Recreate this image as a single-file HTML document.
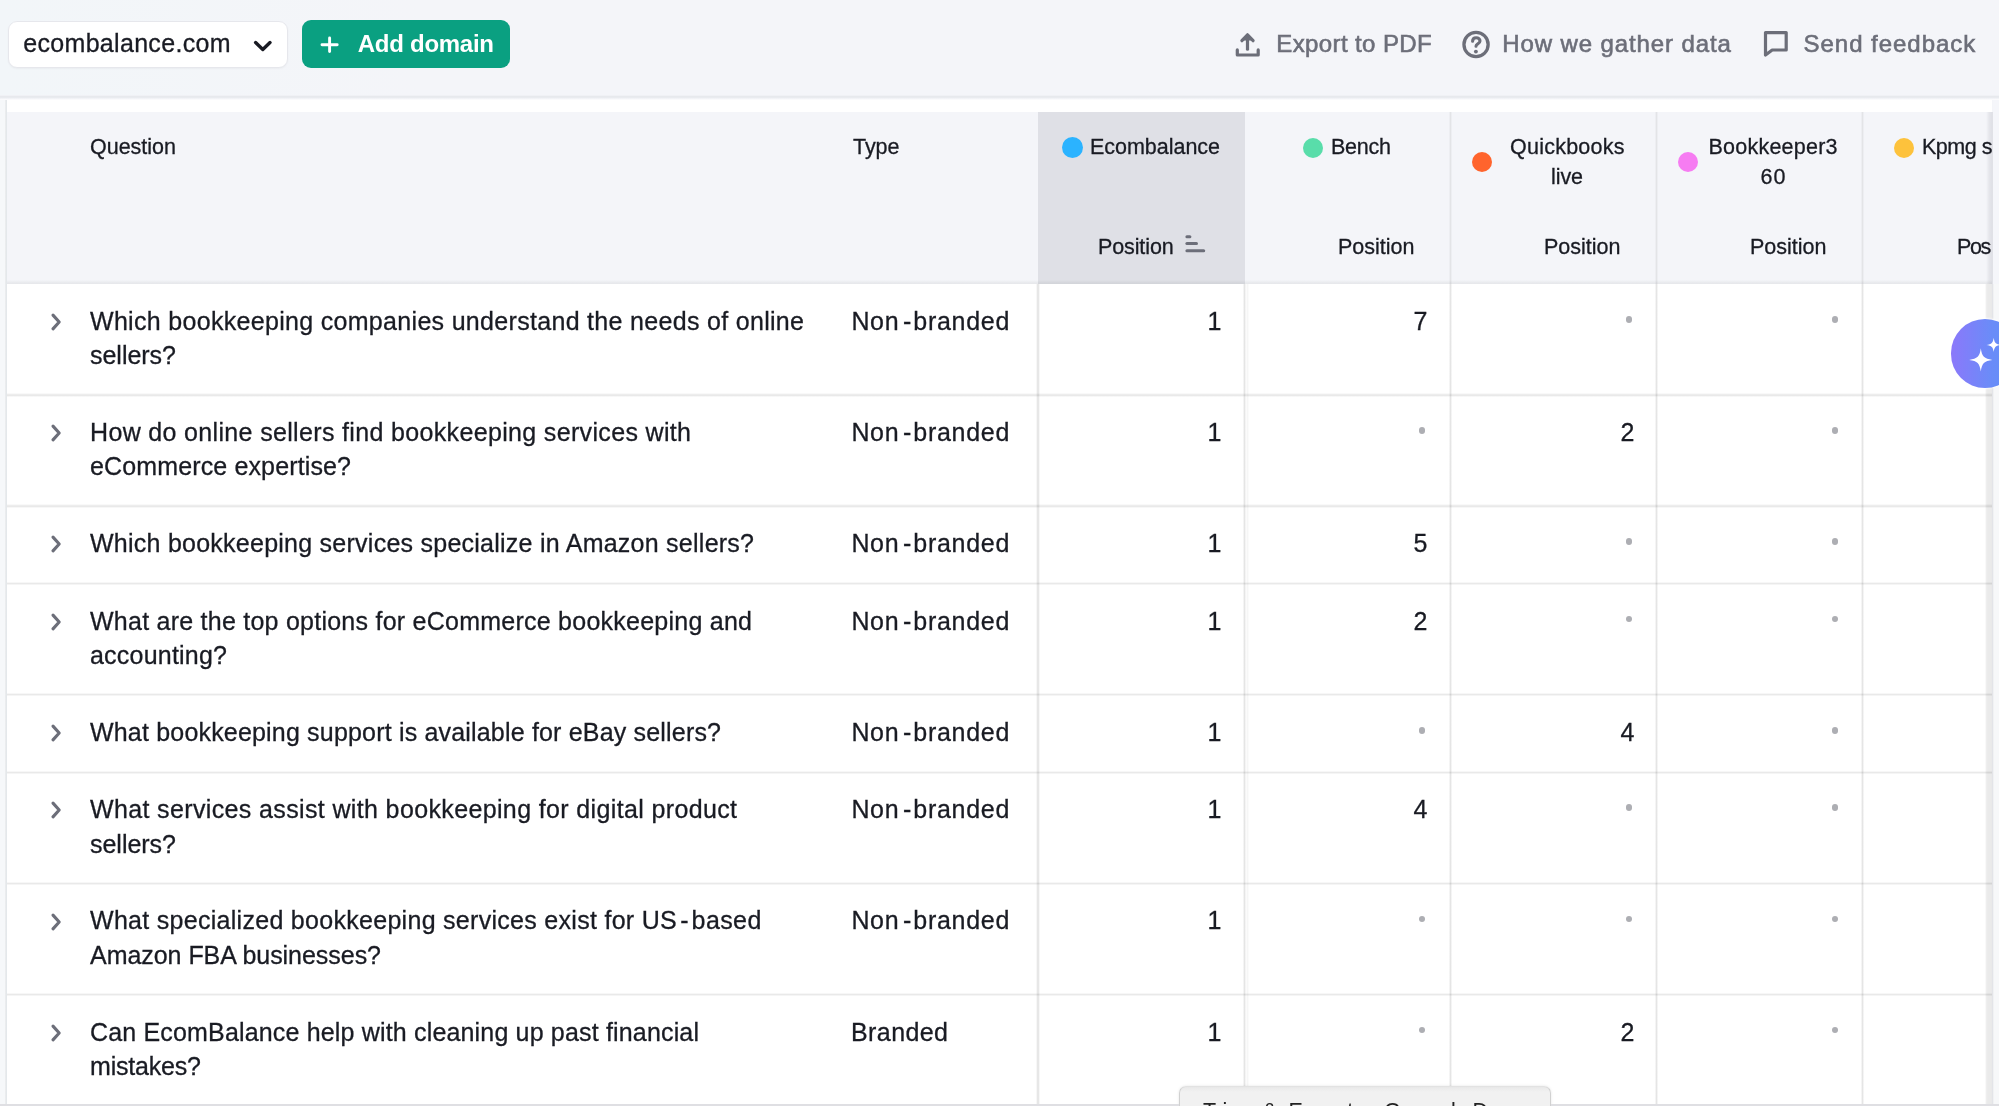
<!DOCTYPE html>
<html lang="en"><head><meta charset="utf-8"><title>Questions</title>
<style>
html,body{margin:0;padding:0}
body{width:1999px;height:1106px;overflow:hidden;position:relative;background:linear-gradient(90deg,#f2f6f9,#f4f5f9 420px);font-family:"Liberation Sans",sans-serif}
.t{position:absolute;white-space:nowrap;line-height:40px;-webkit-text-stroke:0.3px #191b23}
.a{position:absolute}
.tt{font-size:21.5px;color:#222;-webkit-text-stroke:0}
.m{-webkit-text-stroke:0.6px #6c6e79}
.dot{position:absolute;width:6.8px;height:6.8px;border-radius:50%;background:#adaeb3}
.hl{position:absolute;left:7px;width:1985px;height:3.4px;background:linear-gradient(rgba(0,0,0,0),rgba(0,0,0,.088) 45%,rgba(0,0,0,.088) 65%,rgba(0,0,0,0))}
.vl{position:absolute;top:112px;width:3.2px;height:994px;background:linear-gradient(90deg,rgba(0,0,0,0),rgba(0,0,0,.1) 40%,rgba(0,0,0,.1) 60%,rgba(0,0,0,0))}
.hd{position:absolute;width:21px;height:21px;border-radius:50%}
</style></head><body>
<div id="page" style="position:absolute;left:0;top:0;width:1999px;height:1106px;overflow:hidden;will-change:transform">
<div class="a" style="left:0;top:95px;width:1999px;height:5px;background:linear-gradient(#f4f5f9,#e7e9ed 30%,#e9ebef 50%,#f5f6f9 78%,#fefefe)"></div>
<div class="a" id="tbl" style="left:7px;top:100px;width:1985px;height:1006px;background:#fff"></div>
<div class="a" style="left:0;top:100px;width:6px;height:1006px;background:#f6f8fa"></div>
<div class="a" style="left:4.8px;top:100px;width:2.6px;height:1006px;background:linear-gradient(90deg,rgba(0,0,0,0),rgba(0,0,0,.085) 45%,rgba(0,0,0,.085) 60%,rgba(0,0,0,0))"></div>
<div class="a" id="thead" style="left:7px;top:112px;width:1985px;height:172px;background:#f4f5f9"></div>
<div class="a" style="left:1038px;top:112px;width:206.5px;height:172px;background:#dfe0e6"></div>
<div class="a" style="left:7px;top:280.4px;width:1985px;height:3.6px;background:linear-gradient(rgba(0,0,0,0),rgba(40,50,40,.05) 60%,rgba(40,50,40,.07))"></div>
<div class="vl" style="left:1036.4px;top:284px;height:822px"></div>
<div class="vl" style="left:1243px;top:284px;height:822px"></div>
<div class="vl" style="left:1246.2px;top:284px;height:822px;width:2.4px;opacity:.35"></div>
<div class="vl" style="left:1448.9px;top:284px;height:822px"></div>
<div class="vl" style="left:1448.9px;height:172px;opacity:.7"></div>
<div class="vl" style="left:1655px;top:284px;height:822px"></div>
<div class="vl" style="left:1655px;height:172px;opacity:.7"></div>
<div class="vl" style="left:1860.9px;top:284px;height:822px"></div>
<div class="vl" style="left:1860.9px;height:172px;opacity:.7"></div>
<div class="hd" style="left:1062px;top:137px;background:#2bb3ff"></div>
<div class="hd" style="left:1303px;top:137.5px;width:20px;height:20px;background:#59ddaa"></div>
<div class="hd" style="left:1472px;top:152px;width:20px;height:20px;background:#ff642d"></div>
<div class="hd" style="left:1678px;top:152px;width:20px;height:20px;background:#f67cf2"></div>
<div class="hd" style="left:1893.5px;top:137.5px;width:20px;height:20px;background:#fdc23c"></div>
<svg class="a" style="left:1184px;top:233px" width="24" height="22" viewBox="0 0 24 22"><g stroke="#6c6e79" stroke-width="3" stroke-linecap="round"><path d="M2.9 3.7H5.9"/><path d="M2.9 10.6H12.5"/><path d="M2.9 17.7H19.7"/></g></svg>
<!-- toolbar -->
<div class="a" style="left:8px;top:21px;width:279.5px;height:47px;box-sizing:border-box;background:#fff;border:1px solid #e6e7ec;border-radius:9px;box-shadow:0 1px 2px rgba(0,0,0,.04)"></div>
<svg class="a" style="left:250px;top:36px" width="26" height="20" viewBox="0 0 26 20"><path d="M5.6 6.6 L12.8 13.4 L20 6.6" fill="none" stroke="#191b23" stroke-width="3.4" stroke-linecap="round" stroke-linejoin="round"/></svg>
<div class="a" style="left:302px;top:20px;width:208.3px;height:48.2px;background:#0aa081;border-radius:9px"></div>
<svg class="a" style="left:319px;top:34px" width="22" height="22" viewBox="0 0 22 22"><path d="M3 10.8H18.2M10.6 4V17.6" fill="none" stroke="#fff" stroke-width="2.9" stroke-linecap="round"/></svg>
<svg class="a" style="left:1233px;top:30px" width="30" height="30" viewBox="0 0 30 30"><g fill="none" stroke="#6c6e79" stroke-width="3.2" stroke-linecap="round" stroke-linejoin="round"><path d="M4.3 19.9V25H25.2V19.9"/><path d="M14.5 6V19.2"/><path d="M8.9 10.7L14.5 4.8L20.1 10.7"/></g><path d="M10.2 10.5L14.5 5.9L18.8 10.5Z" fill="#6c6e79"/></svg>
<svg class="a" style="left:1460px;top:29px" width="32" height="32" viewBox="0 0 32 32"><circle cx="16.05" cy="15.5" r="12.1" fill="none" stroke="#6c6e79" stroke-width="3.3"/><path d="M12.6 12.3C12.6 9.9 14.2 8.7 16.2 8.7C18.4 8.7 20 10.1 20 12C20 14.6 16 14.9 16 17.3" fill="none" stroke="#6c6e79" stroke-width="3.1" stroke-linecap="round"/><circle cx="15.9" cy="22.6" r="1.95" fill="#6c6e79"/></svg>
<svg class="a" style="left:1760px;top:28px" width="32" height="32" viewBox="0 0 32 32"><path d="M5.5 27V4.55H26.2V22H12.2Z" fill="none" stroke="#6c6e79" stroke-width="3.2" stroke-linejoin="round"/></svg>
<svg class="a" style="left:46px;top:309.90px" width="22" height="24" viewBox="0 0 22 24"><path d="M7 5.1 L13.2 12 L7 18.9" fill="none" stroke="#6c6e79" stroke-width="3.1" stroke-linecap="round" stroke-linejoin="round"/></svg>
<div class="dot" style="left:1625.5px;top:315.9px"></div>
<div class="dot" style="left:1831.5px;top:315.9px"></div>
<div class="hl" style="top:393.2px"></div>
<svg class="a" style="left:46px;top:421.00px" width="22" height="24" viewBox="0 0 22 24"><path d="M7 5.1 L13.2 12 L7 18.9" fill="none" stroke="#6c6e79" stroke-width="3.1" stroke-linecap="round" stroke-linejoin="round"/></svg>
<div class="dot" style="left:1418.5px;top:427.0px"></div>
<div class="dot" style="left:1831.5px;top:427.0px"></div>
<div class="hl" style="top:504.3px"></div>
<svg class="a" style="left:46px;top:532.10px" width="22" height="24" viewBox="0 0 22 24"><path d="M7 5.1 L13.2 12 L7 18.9" fill="none" stroke="#6c6e79" stroke-width="3.1" stroke-linecap="round" stroke-linejoin="round"/></svg>
<div class="dot" style="left:1625.5px;top:538.1px"></div>
<div class="dot" style="left:1831.5px;top:538.1px"></div>
<div class="hl" style="top:581.9px"></div>
<svg class="a" style="left:46px;top:609.70px" width="22" height="24" viewBox="0 0 22 24"><path d="M7 5.1 L13.2 12 L7 18.9" fill="none" stroke="#6c6e79" stroke-width="3.1" stroke-linecap="round" stroke-linejoin="round"/></svg>
<div class="dot" style="left:1625.5px;top:615.7px"></div>
<div class="dot" style="left:1831.5px;top:615.7px"></div>
<div class="hl" style="top:693.0px"></div>
<svg class="a" style="left:46px;top:720.80px" width="22" height="24" viewBox="0 0 22 24"><path d="M7 5.1 L13.2 12 L7 18.9" fill="none" stroke="#6c6e79" stroke-width="3.1" stroke-linecap="round" stroke-linejoin="round"/></svg>
<div class="dot" style="left:1418.5px;top:726.8px"></div>
<div class="dot" style="left:1831.5px;top:726.8px"></div>
<div class="hl" style="top:770.6px"></div>
<svg class="a" style="left:46px;top:798.40px" width="22" height="24" viewBox="0 0 22 24"><path d="M7 5.1 L13.2 12 L7 18.9" fill="none" stroke="#6c6e79" stroke-width="3.1" stroke-linecap="round" stroke-linejoin="round"/></svg>
<div class="dot" style="left:1625.5px;top:804.4px"></div>
<div class="dot" style="left:1831.5px;top:804.4px"></div>
<div class="hl" style="top:881.7px"></div>
<svg class="a" style="left:46px;top:909.50px" width="22" height="24" viewBox="0 0 22 24"><path d="M7 5.1 L13.2 12 L7 18.9" fill="none" stroke="#6c6e79" stroke-width="3.1" stroke-linecap="round" stroke-linejoin="round"/></svg>
<div class="dot" style="left:1418.5px;top:915.5px"></div>
<div class="dot" style="left:1625.5px;top:915.5px"></div>
<div class="dot" style="left:1831.5px;top:915.5px"></div>
<div class="hl" style="top:992.8px"></div>
<svg class="a" style="left:46px;top:1020.60px" width="22" height="24" viewBox="0 0 22 24"><path d="M7 5.1 L13.2 12 L7 18.9" fill="none" stroke="#6c6e79" stroke-width="3.1" stroke-linecap="round" stroke-linejoin="round"/></svg>
<div class="dot" style="left:1418.5px;top:1026.6px"></div>
<div class="dot" style="left:1831.5px;top:1026.6px"></div>
<div class="hl" style="top:1103.9px"></div>
<div class="t " style="left:90.00px;top:301px;font-size:25px;letter-spacing:0.310px;color:#191b23;">Which bookkeeping companies understand the needs of online</div>
<div class="t " style="left:90.00px;top:335px;font-size:25px;letter-spacing:-0.021px;color:#191b23;">sellers?</div>
<div class="t " style="left:851.40px;top:301px;font-size:25px;letter-spacing:0.669px;color:#191b23;">Non</div>
<div class="t " style="left:903.10px;top:301px;font-size:25px;letter-spacing:0.000px;color:#191b23;">-</div>
<div class="t " style="left:913.30px;top:301px;font-size:25px;letter-spacing:0.709px;color:#191b23;">branded</div>
<div class="t " style="left:1207.40px;top:301px;font-size:25px;letter-spacing:0.000px;color:#191b23;">1</div>
<div class="t " style="left:1413.60px;top:301px;font-size:25px;letter-spacing:0.000px;color:#191b23;">7</div>
<div class="t " style="left:90.00px;top:412px;font-size:25px;letter-spacing:0.340px;color:#191b23;">How do online sellers find bookkeeping services with</div>
<div class="t " style="left:90.00px;top:446px;font-size:25px;letter-spacing:0.135px;color:#191b23;">eCommerce expertise?</div>
<div class="t " style="left:851.40px;top:412px;font-size:25px;letter-spacing:0.669px;color:#191b23;">Non</div>
<div class="t " style="left:903.10px;top:412px;font-size:25px;letter-spacing:0.000px;color:#191b23;">-</div>
<div class="t " style="left:913.30px;top:412px;font-size:25px;letter-spacing:0.709px;color:#191b23;">branded</div>
<div class="t " style="left:1207.40px;top:412px;font-size:25px;letter-spacing:0.000px;color:#191b23;">1</div>
<div class="t " style="left:1620.40px;top:412px;font-size:25px;letter-spacing:0.000px;color:#191b23;">2</div>
<div class="t " style="left:90.00px;top:523px;font-size:25px;letter-spacing:0.249px;color:#191b23;">Which bookkeeping services specialize in Amazon sellers?</div>
<div class="t " style="left:851.40px;top:523px;font-size:25px;letter-spacing:0.669px;color:#191b23;">Non</div>
<div class="t " style="left:903.10px;top:523px;font-size:25px;letter-spacing:0.000px;color:#191b23;">-</div>
<div class="t " style="left:913.30px;top:523px;font-size:25px;letter-spacing:0.709px;color:#191b23;">branded</div>
<div class="t " style="left:1207.40px;top:523px;font-size:25px;letter-spacing:0.000px;color:#191b23;">1</div>
<div class="t " style="left:1413.60px;top:523px;font-size:25px;letter-spacing:0.000px;color:#191b23;">5</div>
<div class="t " style="left:90.00px;top:601px;font-size:25px;letter-spacing:0.245px;color:#191b23;">What are the top options for eCommerce bookkeeping and</div>
<div class="t " style="left:90.00px;top:635px;font-size:25px;letter-spacing:0.217px;color:#191b23;">accounting?</div>
<div class="t " style="left:851.40px;top:601px;font-size:25px;letter-spacing:0.669px;color:#191b23;">Non</div>
<div class="t " style="left:903.10px;top:601px;font-size:25px;letter-spacing:0.000px;color:#191b23;">-</div>
<div class="t " style="left:913.30px;top:601px;font-size:25px;letter-spacing:0.709px;color:#191b23;">branded</div>
<div class="t " style="left:1207.40px;top:601px;font-size:25px;letter-spacing:0.000px;color:#191b23;">1</div>
<div class="t " style="left:1413.60px;top:601px;font-size:25px;letter-spacing:0.000px;color:#191b23;">2</div>
<div class="t " style="left:90.00px;top:712px;font-size:25px;letter-spacing:0.182px;color:#191b23;">What bookkeeping support is available for eBay sellers?</div>
<div class="t " style="left:851.40px;top:712px;font-size:25px;letter-spacing:0.669px;color:#191b23;">Non</div>
<div class="t " style="left:903.10px;top:712px;font-size:25px;letter-spacing:0.000px;color:#191b23;">-</div>
<div class="t " style="left:913.30px;top:712px;font-size:25px;letter-spacing:0.709px;color:#191b23;">branded</div>
<div class="t " style="left:1207.40px;top:712px;font-size:25px;letter-spacing:0.000px;color:#191b23;">1</div>
<div class="t " style="left:1620.40px;top:712px;font-size:25px;letter-spacing:0.000px;color:#191b23;">4</div>
<div class="t " style="left:90.00px;top:789px;font-size:25px;letter-spacing:0.363px;color:#191b23;">What services assist with bookkeeping for digital product</div>
<div class="t " style="left:90.00px;top:824px;font-size:25px;letter-spacing:-0.021px;color:#191b23;">sellers?</div>
<div class="t " style="left:851.40px;top:789px;font-size:25px;letter-spacing:0.669px;color:#191b23;">Non</div>
<div class="t " style="left:903.10px;top:789px;font-size:25px;letter-spacing:0.000px;color:#191b23;">-</div>
<div class="t " style="left:913.30px;top:789px;font-size:25px;letter-spacing:0.709px;color:#191b23;">branded</div>
<div class="t " style="left:1207.40px;top:789px;font-size:25px;letter-spacing:0.000px;color:#191b23;">1</div>
<div class="t " style="left:1413.60px;top:789px;font-size:25px;letter-spacing:0.000px;color:#191b23;">4</div>
<div class="t " style="left:90.00px;top:900px;font-size:25px;letter-spacing:0.290px;color:#191b23;">What specialized bookkeeping services exist for US</div>
<div class="t " style="left:680.20px;top:900px;font-size:25px;letter-spacing:0.000px;color:#191b23;">-</div>
<div class="t " style="left:691.60px;top:900px;font-size:25px;letter-spacing:0.396px;color:#191b23;">based</div>
<div class="t " style="left:90.00px;top:935px;font-size:25px;letter-spacing:-0.039px;color:#191b23;">Amazon FBA businesses?</div>
<div class="t " style="left:851.40px;top:900px;font-size:25px;letter-spacing:0.669px;color:#191b23;">Non</div>
<div class="t " style="left:903.10px;top:900px;font-size:25px;letter-spacing:0.000px;color:#191b23;">-</div>
<div class="t " style="left:913.30px;top:900px;font-size:25px;letter-spacing:0.709px;color:#191b23;">branded</div>
<div class="t " style="left:1207.40px;top:900px;font-size:25px;letter-spacing:0.000px;color:#191b23;">1</div>
<div class="t " style="left:90.00px;top:1012px;font-size:25px;letter-spacing:0.169px;color:#191b23;">Can EcomBalance help with cleaning up past financial</div>
<div class="t " style="left:90.00px;top:1046px;font-size:25px;letter-spacing:-0.192px;color:#191b23;">mistakes?</div>
<div class="t " style="left:851.00px;top:1012px;font-size:25px;letter-spacing:0.413px;color:#191b23;">Branded</div>
<div class="t " style="left:1207.40px;top:1012px;font-size:25px;letter-spacing:0.000px;color:#191b23;">1</div>
<div class="t " style="left:1620.40px;top:1012px;font-size:25px;letter-spacing:0.000px;color:#191b23;">2</div>
<div class="t " style="left:90.00px;top:127px;font-size:21.5px;letter-spacing:-0.008px;color:#191b23;">Question</div>
<div class="t " style="left:853.00px;top:127px;font-size:21.5px;letter-spacing:-0.037px;color:#191b23;">Type</div>
<div class="t " style="left:1090.00px;top:127px;font-size:21.5px;letter-spacing:-0.027px;color:#191b23;">Ecombalance</div>
<div class="t " style="left:1098.00px;top:227px;font-size:21.5px;letter-spacing:-0.113px;color:#191b23;">Position</div>
<div class="t " style="left:1331.00px;top:127px;font-size:21.5px;letter-spacing:-0.241px;color:#191b23;">Bench</div>
<div class="t " style="left:1338.00px;top:227px;font-size:21.5px;letter-spacing:0.002px;color:#191b23;">Position</div>
<div class="t " style="left:1510.00px;top:127px;font-size:21.5px;letter-spacing:0.241px;color:#191b23;">Quickbooks</div>
<div class="t " style="left:1551.00px;top:157px;font-size:21.5px;letter-spacing:-0.087px;color:#191b23;">live</div>
<div class="t " style="left:1544.00px;top:227px;font-size:21.5px;letter-spacing:0.002px;color:#191b23;">Position</div>
<div class="t " style="left:1708.50px;top:127px;font-size:21.5px;letter-spacing:0.230px;color:#191b23;">Bookkeeper3</div>
<div class="t " style="left:1760.50px;top:157px;font-size:21.5px;letter-spacing:1.085px;color:#191b23;">60</div>
<div class="t " style="left:1750.00px;top:227px;font-size:21.5px;letter-spacing:0.002px;color:#191b23;">Position</div>
<div class="t " style="left:1922.00px;top:127px;font-size:21.5px;letter-spacing:-0.478px;color:#191b23;">Kpmg s</div>
<div class="t " style="left:1957.00px;top:227px;font-size:21.5px;letter-spacing:-1.374px;color:#191b23;">Pos</div>
<div class="t " style="left:23.30px;top:23px;font-size:25px;letter-spacing:0.308px;color:#191b23;">ecombalance.com</div>
<div class="t " style="left:357.80px;top:24px;font-size:24px;letter-spacing:-0.273px;color:#fff;font-weight:700;-webkit-text-stroke:0;">Add domain</div>
<div class="t m" style="left:1276.30px;top:24px;font-size:24px;letter-spacing:0.390px;color:#6c6e79;">Export to PDF</div>
<div class="t m" style="left:1502.30px;top:24px;font-size:24px;letter-spacing:0.885px;color:#6c6e79;">How we gather data</div>
<div class="t m" style="left:1803.60px;top:24px;font-size:24px;letter-spacing:0.956px;color:#6c6e79;">Send feedback</div>
<!-- right edge -->
<div class="a" style="left:1992.6px;top:100px;width:7px;height:1006px;background:#f7f8f9"></div>
<div class="a" style="left:1984.6px;top:284px;width:9.6px;height:822px;background:linear-gradient(90deg,rgba(0,0,0,0),rgba(0,0,0,.08) 20%,rgba(0,0,0,.085) 78%,rgba(0,0,0,0))"></div>
<div class="a" style="left:1986.4px;top:112px;width:6.2px;height:172px;background:linear-gradient(90deg,rgba(0,0,20,0),rgba(0,0,20,.06) 45%,rgba(0,0,20,.085) 92%,rgba(0,0,20,0))"></div>
<div class="a" style="left:1992.6px;top:100px;width:7px;height:184px;background:#f5f6fa"></div>
<!-- floating button -->
<div class="a" style="left:1951.2px;top:319.4px;width:68.3px;height:68.3px;border-radius:50%;background:linear-gradient(90deg,#8b78fa,#6a8cf8 60%,#5f92f8);box-shadow:0 0 2px 1px rgba(255,255,255,.9)"></div>
<svg class="a" style="left:1950px;top:318px" width="49" height="72" viewBox="0 0 49 72"><path d="M30.80 30.30 C31.91 38.56 34.14 40.79 42.40 41.90 C34.14 43.01 31.91 45.24 30.80 53.50 C29.69 45.24 27.46 43.01 19.20 41.90 C27.46 40.79 29.69 38.56 30.80 30.30Z" fill="#fff"/><path d="M43.70 19.70 C44.39 24.83 45.77 26.21 50.90 26.90 C45.77 27.59 44.39 28.97 43.70 34.10 C43.01 28.97 41.63 27.59 36.50 26.90 C41.63 26.21 43.01 24.83 43.70 19.70Z" fill="#fff"/></svg>
<!-- tooltip -->
<div class="a" style="left:1179.2px;top:1086.2px;width:372px;height:40px;box-sizing:border-box;background:linear-gradient(#e7e7e7,#ececec 2px,#f1f1f1 5px);border:1.2px solid rgba(0,0,0,.13);border-top-color:rgba(0,0,0,.06);border-radius:7px;box-shadow:0 0 3px rgba(0,0,0,.10)"></div>
<div class="t tt" style="left:1203px;top:1091px">Trim</div>
<div class="t tt" style="left:1262.5px;top:1091px">&amp;</div>
<div class="t tt" style="left:1288.5px;top:1091px;letter-spacing:0.5px">Export</div>
<div class="t tt" style="left:1357px;top:1091px">—</div>
<div class="t tt" style="left:1384px;top:1091px;letter-spacing:3.6px">Google</div>
<div class="t tt" style="left:1472.5px;top:1091px">Docs</div>
<div class="a" style="left:0;top:1104px;width:1179px;height:2px;background:#dfdfe3"></div>
<div class="a" style="left:1551px;top:1104px;width:448px;height:2px;background:#dfdfe3"></div>
</div>
</body></html>
